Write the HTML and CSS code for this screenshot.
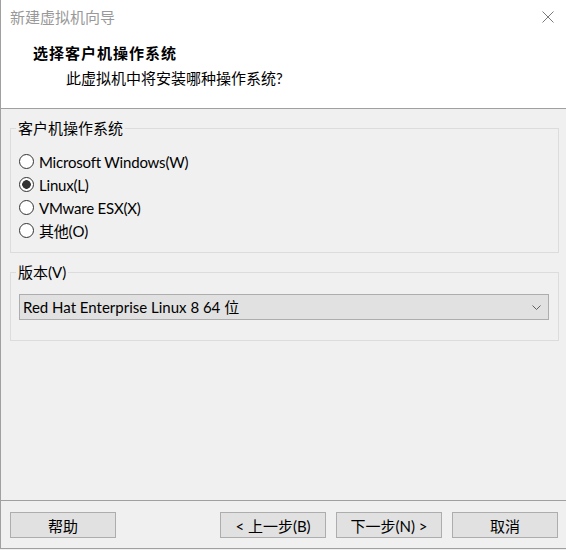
FILE: index.html
```html
<!DOCTYPE html>
<html lang="zh-CN">
<head>
  <meta charset="UTF-8" />
  <title>新建虚拟机向导</title>
  <link rel="stylesheet" href="styles.css">
</head>
<body>
  <div class="window">

    <!-- Title bar -->
    <div class="titlebar">
      <span class="titlebar-text">新建虚拟机向导</span>
      <svg class="close-btn" width="12" height="12" viewBox="0 0 12 12">
        <path d="M0.5 0.5 L11.5 11.5 M11.5 0.5 L0.5 11.5" stroke="#7a7a7a" stroke-width="1" fill="none"/>
      </svg>
    </div>

    <!-- Wizard header -->
    <div class="wizard-header">
      <div class="wizard-title">选择客户机操作系统</div>
      <div class="wizard-subtitle">此虚拟机中将安装哪种操作系统?</div>
    </div>

    <!-- Page body -->
    <div class="wizard-body">
      <fieldset class="group">
        <legend>客户机操作系统</legend>
        <div class="radio-list">
          <label class="radio"><span class="radio-dot"></span>Microsoft Windows(W)</label>
          <label class="radio"><span class="radio-dot checked"></span>Linux(L)</label>
          <label class="radio"><span class="radio-dot"></span>VMware ESX(X)</label>
          <label class="radio"><span class="radio-dot"></span>其他(O)</label>
        </div>
      </fieldset>

      <fieldset class="group group-version">
        <legend>版本(V)</legend>
        <div class="combo">
          <span class="combo-text">Red Hat Enterprise Linux 8 64 位</span>
          <svg class="combo-arrow" width="9" height="5" viewBox="0 0 9 5">
            <path d="M0.5 0.5 L4.5 4.5 L8.5 0.5" stroke="#606060" stroke-width="1" fill="none"/>
          </svg>
        </div>
      </fieldset>
    </div>

    <!-- Buttons -->
    <div class="wizard-footer">
      <button class="btn">帮助</button>
      <div class="btn-group">
        <button class="btn">&lt; 上一步(B)</button>
        <button class="btn">下一步(N) &gt;</button>
        <button class="btn">取消</button>
      </div>
    </div>

  </div>
</body>
</html>
```

FILE: styles.css
```css
* {
  box-sizing: border-box;
}

body {
  margin: 0;
  background-color: #f0f0f0;
  font-family: Lato, "Noto Sans CJK SC", sans-serif;
  font-size: 15px;
  color: #000;
}

.window {
  display: flex;
  flex-direction: column;
  width: 566px;
  height: 549px;
  border-left: 1px solid #a0a0a0;
  border-bottom: 1px solid #a0a0a0;
  background-color: #f0f0f0;
}

/* Title bar */
.titlebar {
  display: flex;
  align-items: center;
  justify-content: space-between;
  height: 34px;
  padding: 0 12px 0 9px;
  background-color: #fff;
}

.titlebar-text {
  color: #999;
  line-height: 20px;
}

.close-btn {
  display: block;
}

/* Header */
.wizard-header {
  background-color: #fff;
  padding: 9px 0 20px 32px;
  border-bottom: 1px solid #a0a0a0;
}

.wizard-title {
  font-weight: bold;
  line-height: 20px;
  letter-spacing: 1px;
  margin-bottom: 5px;
}

.wizard-subtitle {
  line-height: 20px;
  padding-left: 33px;
}

/* Body */
.wizard-body {
  flex: 1;
  padding: 9px 7px 0 9px;
}

.group {
  margin: 0;
  padding: 12px 9px 10px 8px;
  border: 1px solid #dcdcdc;
  min-width: 0;
}

.group legend {
  padding: 0 2px;
  margin-left: -3px;
  line-height: 20px;
}

.group-version {
  margin-top: 9px;
  padding-bottom: 20px;
}

.radio {
  display: flex;
  align-items: center;
  height: 23px;
  gap: 5px;
  letter-spacing: -0.2px;
}

.radio-dot {
  width: 15px;
  height: 15px;
  border: 1px solid #333;
  border-radius: 50%;
  background-color: #fff;
}

.radio-dot.checked {
  background: radial-gradient(circle, #333 0 4px, #fff 4.6px);
}

/* Combo box */
.combo {
  display: flex;
  align-items: center;
  justify-content: space-between;
  height: 26px;
  padding: 0 7px 0 3px;
  background-color: #e1e1e1;
  border: 1px solid #adadad;
}

.combo-text {
  line-height: 20px;
}

.combo-arrow {
  display: block;
}

/* Footer */
.wizard-footer {
  display: flex;
  justify-content: space-between;
  padding: 11px 8px 10px 9px;
  border-top: 1px solid #a0a0a0;
}

.btn-group {
  display: flex;
  gap: 10px;
}

.btn {
  width: 106px;
  height: 26px;
  padding: 0;
  font-family: inherit;
  font-size: 15px;
  color: #000;
  background-color: #e1e1e1;
  border: 1px solid #adadad;
}
```
